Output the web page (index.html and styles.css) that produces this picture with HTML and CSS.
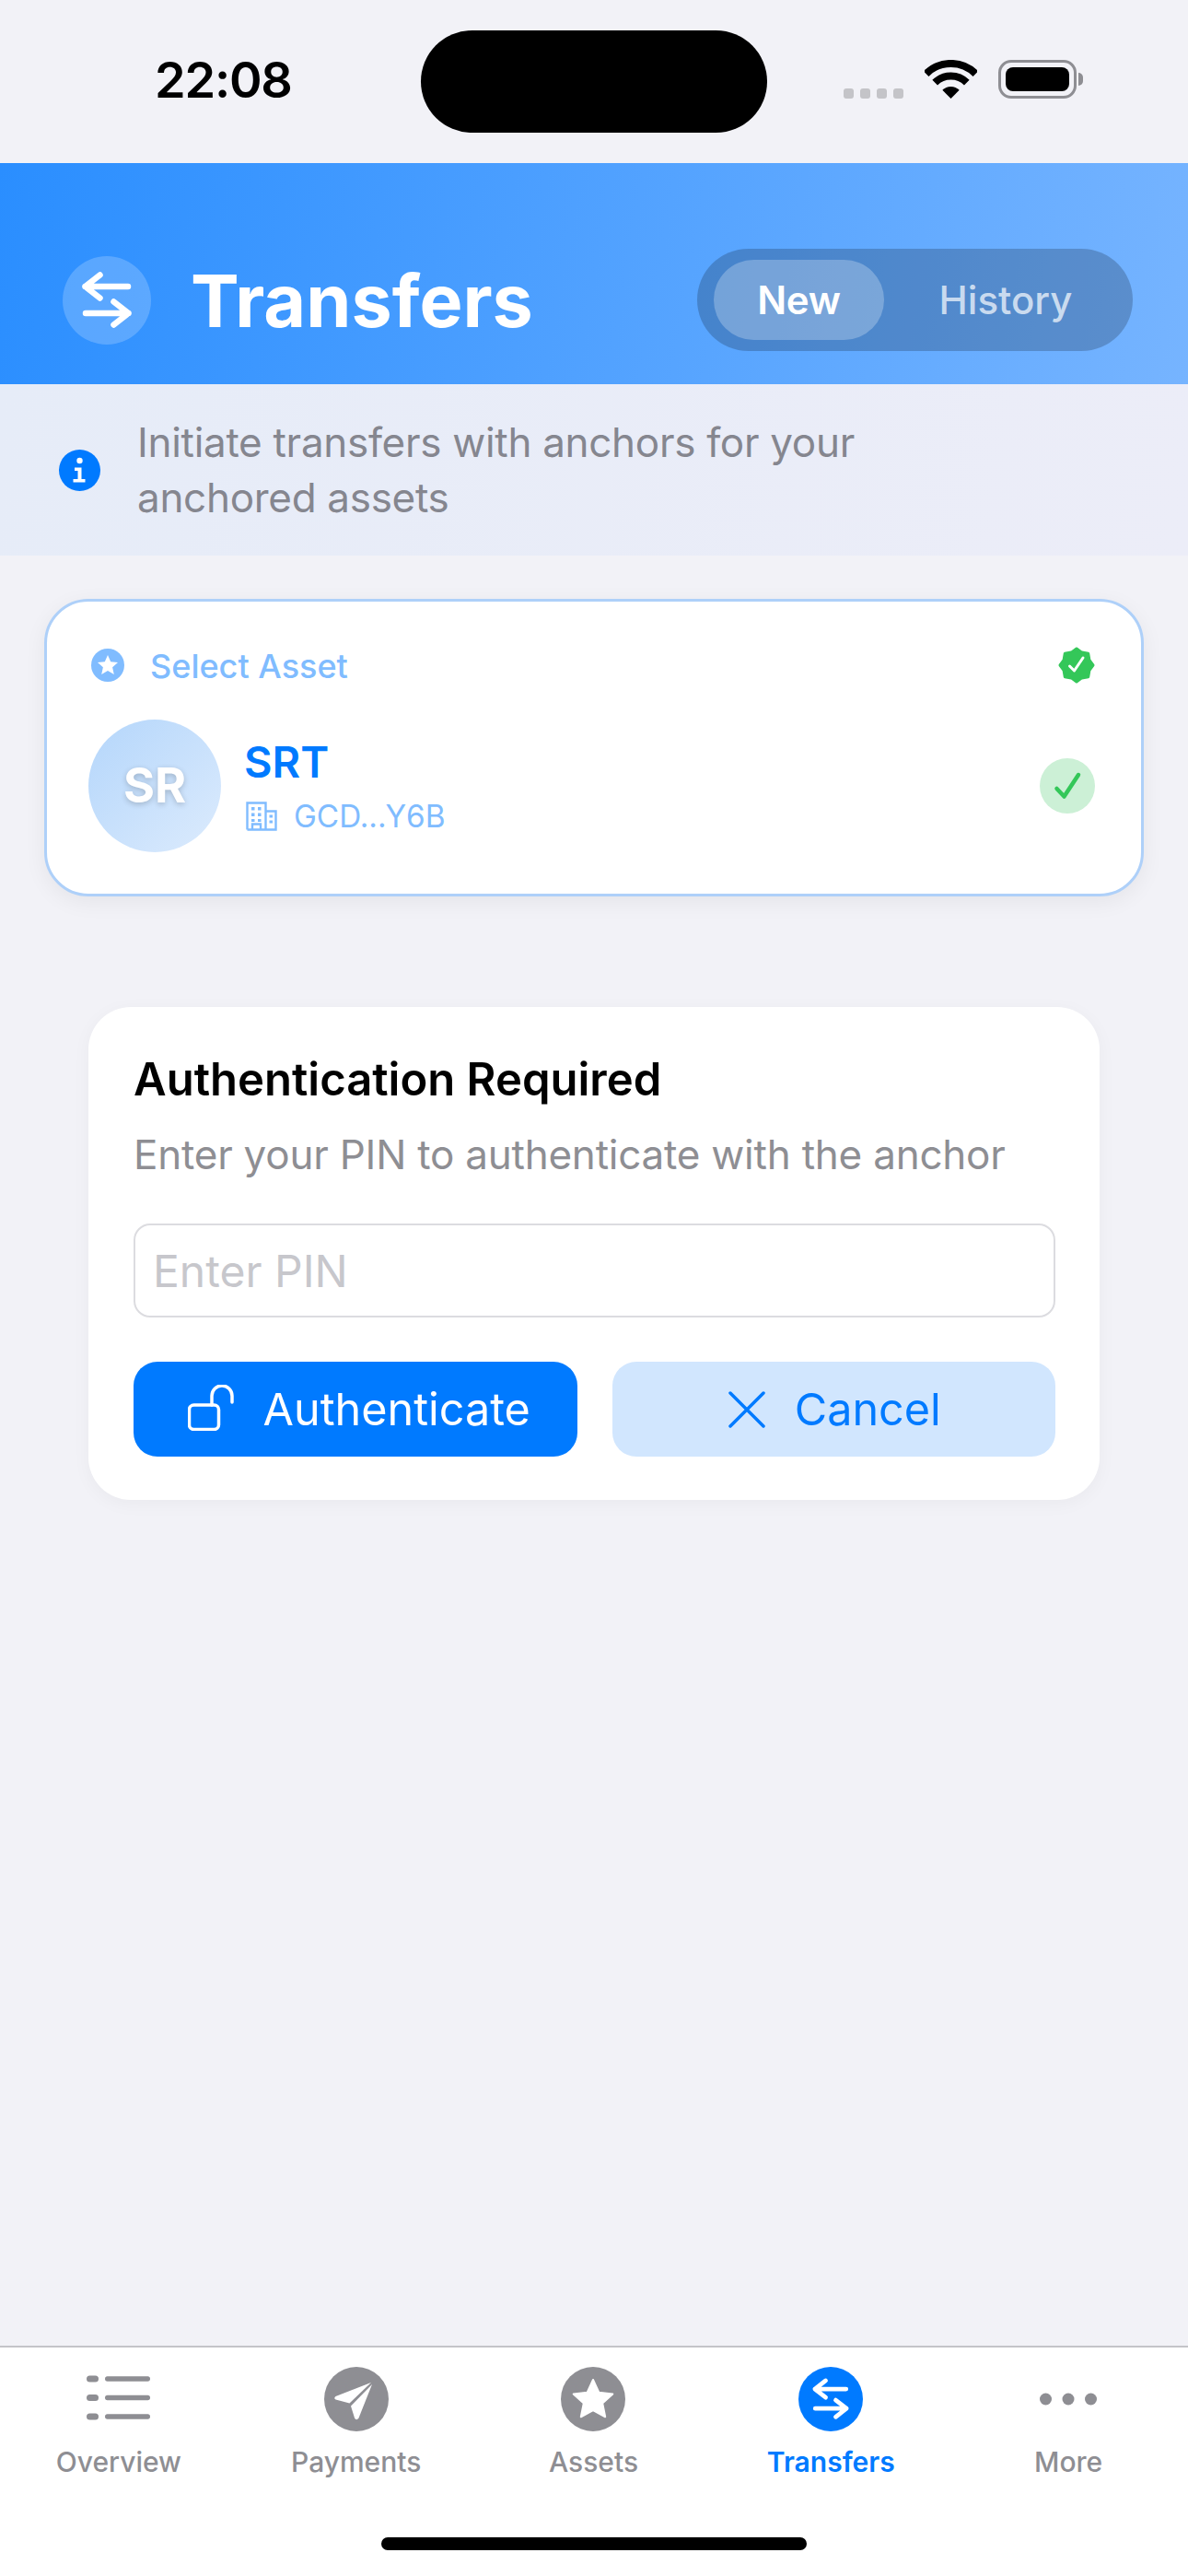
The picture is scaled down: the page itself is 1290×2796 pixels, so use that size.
FILE: index.html
```html
<!DOCTYPE html>
<html lang="en">

<head>
    <meta charset="UTF-8">
    <meta name="viewport" content="width=device-width, initial-scale=1.0">
    <title>Transfers</title>
    <link rel="stylesheet" href="styles.css">
</head>

<body>
    <div class="status-bar">
        <span class="status-time">22:08</span>
        <div class="island"></div>
        <div class="status-icons">
            <div class="signal"><i></i><i></i><i></i><i></i></div>
            <svg class="wifi" viewBox="0 0 57 42">
                <path d="M1.6 15.1A38 38 0 0 1 55.4 15.1" fill="none" stroke="#000" stroke-width="8" />
                <path d="M11.2 24.7A24.5 24.5 0 0 1 45.8 24.7" fill="none" stroke="#000" stroke-width="8" />
                <path d="M28.5 42L19.3 32.8A13 13 0 0 1 37.7 32.8Z" fill="#000" />
            </svg>
            <div class="battery">
                <div class="battery-body"><div class="battery-fill"></div></div>
                <div class="battery-tip"></div>
            </div>
        </div>
    </div>

    <header class="header">
        <div class="header-title">
            <div class="header-icon">
                <svg class="arrows" viewBox="0 0 96 96">
                    <path d="M24.5 33H71M40.5 20.5L24.5 33L40.5 45.5M25 62H71.5M55.5 49.5L71.5 62L55.5 74.5" />
                </svg>
            </div>
            <h1>Transfers</h1>
        </div>
        <div class="segment">
            <button class="segment-btn active" type="button">New</button>
            <button class="segment-btn" type="button">History</button>
        </div>
    </header>

    <div class="info-band">
        <svg class="info-icon" viewBox="0 0 45 45">
            <circle cx="22.5" cy="22.5" r="22.5" fill="#007aff" />
            <circle cx="22.5" cy="12" r="3.2" fill="#fff" />
            <path d="M17 19.5h7.5v12.5h4v3.5h-13v-3.5h5v-9h-3.5z" fill="#fff" />
        </svg>
        <p>Initiate transfers with anchors for your<br>anchored assets</p>
    </div>

    <main class="content">
        <section class="asset-card">
            <div class="asset-head">
                <div class="asset-label">
                    <svg class="star-icon" viewBox="0 0 36 36">
                        <circle cx="18" cy="18" r="18" fill="#80bcff" />
                        <path d="M18 7l3.2 7.2 7.8.8-5.9 5.2 1.7 7.7-6.8-4-6.8 4 1.7-7.7L7 15l7.8-.8z" fill="#fff" />
                    </svg>
                    <span>Select Asset</span>
                </div>
                <svg class="verified" viewBox="0 0 40 40">
                    <path d="M20 2L25.7 6.1 32.7 7.3 33.9 14.3 38 20 33.9 25.7 32.7 32.7 25.7 33.9 20 38 14.3 33.9 7.3 32.7 6.1 25.7 2 20 6.1 14.3 7.3 7.3 14.3 6.1Z" fill="#34c759" stroke="#34c759" stroke-width="3" stroke-linejoin="round" />
                    <path d="M12.5 21l5 5 9.5-14" fill="none" stroke="#fff" stroke-width="3" stroke-linecap="round" stroke-linejoin="round" />
                </svg>
            </div>
            <div class="asset-row">
                <div class="avatar">SR</div>
                <div class="asset-info">
                    <div class="asset-code">SRT</div>
                    <div class="asset-issuer">
                        <svg class="building" viewBox="0 0 34 32">
                            <path d="M1.5 30.5V1.5h20v29M21.5 10.5h11v20H1.5M7 30.5v-6h9v6" fill="none" stroke="#80bcff" stroke-width="2.4" />
                            <path d="M6 6h3.5v3.5H6zM13 6h3.5v3.5H13zM6 12.5h3.5V16H6zM13 12.5h3.5V16H13zM6 19h3.5v3H6zM13 19h3.5v3H13zM25.5 14.5h3.5v3h-3.5zM25.5 20.5h3.5v3h-3.5z" fill="#80bcff" />
                        </svg>
                        <span>GCD...Y6B</span>
                    </div>
                </div>
                <div class="check-circle">
                    <svg viewBox="0 0 60 60">
                        <path d="M18.5 33l8 8.5L42 18" fill="none" stroke="#34c759" stroke-width="4.5" stroke-linecap="round" stroke-linejoin="round" />
                    </svg>
                </div>
            </div>
        </section>

        <section class="auth-card">
            <h2>Authentication Required</h2>
            <p>Enter your PIN to authenticate with the anchor</p>
            <input class="pin-input" type="password" placeholder="Enter PIN">
            <div class="auth-actions">
                <button class="btn btn-primary" type="button">
                    <svg class="lock" viewBox="0 0 50 50">
                        <rect x="1.5" y="22" width="32" height="26.5" rx="5" />
                        <path d="M26 22V12a11 11 0 0 1 22 0v7" stroke-linecap="round" />
                    </svg>
                    Authenticate
                </button>
                <button class="btn btn-secondary" type="button">
                    <svg class="cross" viewBox="0 0 40 40">
                        <path d="M2 2L38 38M38 2L2 38" />
                    </svg>
                    Cancel
                </button>
            </div>
        </section>
    </main>

    <nav class="tab-bar">
        <div class="tab">
            <svg class="tab-icon" viewBox="0 0 70 70">
                <g fill="#8e8e93">
                    <rect x="0" y="9.5" width="13" height="7" rx="3.5" />
                    <rect x="20" y="10.3" width="49" height="5.5" rx="2.7" />
                    <rect x="0" y="30" width="13" height="7" rx="3.5" />
                    <rect x="20" y="30.8" width="49" height="5.5" rx="2.7" />
                    <rect x="0" y="50.5" width="13" height="7" rx="3.5" />
                    <rect x="20" y="51.3" width="49" height="5.5" rx="2.7" />
                </g>
            </svg>
            <span>Overview</span>
        </div>
        <div class="tab">
            <svg class="tab-icon" viewBox="0 0 70 70">
                <circle cx="35" cy="35" r="35" fill="#8e8e93" />
                <path d="M51 17L12.5 32Q10 34 12.5 35.5L27.5 39.5Z" fill="#fff" />
                <path d="M52 19L29 42.5L33 55.5Q35 59 37.5 55.5Z" fill="#fff" />
            </svg>
            <span>Payments</span>
        </div>
        <div class="tab">
            <svg class="tab-icon" viewBox="0 0 70 70">
                <circle cx="35" cy="35" r="35" fill="#8e8e93" />
                <path d="M35 14l6.3 13.7 15 1.7-11.1 10.1 3 14.8L35 47l-13.2 7.3 3-14.8-11.1-10.1 15-1.7z" fill="#fff" stroke="#fff" stroke-width="2" stroke-linejoin="round" />
            </svg>
            <span>Assets</span>
        </div>
        <div class="tab tab-active">
            <svg class="tab-icon" viewBox="0 0 70 70">
                <circle cx="35" cy="35" r="35" fill="#007aff" />
                <svg class="arrows" x="0" y="0" width="70" height="70" viewBox="0 0 96 96">
                    <path d="M24.5 33H71M40.5 20.5L24.5 33L40.5 45.5M25 62H71.5M55.5 49.5L71.5 62L55.5 74.5" />
                </svg>
            </svg>
            <span>Transfers</span>
        </div>
        <div class="tab">
            <svg class="tab-icon" viewBox="0 0 70 70">
                <g fill="#8e8e93">
                    <circle cx="10.5" cy="35" r="6.5" />
                    <circle cx="35" cy="35" r="6.5" />
                    <circle cx="59.5" cy="35" r="6.5" />
                </g>
            </svg>
            <span>More</span>
        </div>
        <div class="home-indicator"></div>
    </nav>
</body>

</html>
```

FILE: styles.css
```css
* {
    box-sizing: border-box;
}

body {
    margin: 0;
    min-height: 2796px;
    display: flex;
    flex-direction: column;
    background-color: #f2f2f7;
    font-family: Inter, "Liberation Sans", sans-serif;
}

/* status bar */
.status-bar {
    height: 177px;
    display: flex;
    align-items: flex-start;
    padding-left: 168px;
}

.status-time {
    width: 289px;
    margin-top: 57px;
    font-size: 54px;
    line-height: 60px;
    font-weight: 600;
    letter-spacing: -1.2px;
    color: #000;
}

.island {
    width: 376px;
    height: 111px;
    margin-top: 33px;
    border-radius: 56px;
    background-color: #000;
}

.status-icons {
    display: flex;
    align-items: flex-end;
    margin-top: 65px;
    margin-left: 83px;
}

.signal {
    display: flex;
    gap: 7px;
    margin-right: 23px;
}

.signal i {
    width: 11px;
    height: 11px;
    border-radius: 3px;
    background-color: #c4c4c8;
}

.wifi {
    width: 57px;
    height: 42px;
    margin-right: 23px;
}

.battery {
    display: flex;
    align-items: center;
}

.battery-body {
    width: 85px;
    height: 42px;
    padding: 5px;
    border: 3px solid #8e8e93;
    border-radius: 14px;
}

.battery-fill {
    width: 100%;
    height: 100%;
    border-radius: 8px;
    background-color: #000;
}

.battery-tip {
    width: 5px;
    height: 14px;
    margin-left: 2px;
    border-radius: 0 5px 5px 0;
    background-color: #8e8e93;
}

/* header */
.header {
    height: 240px;
    display: flex;
    justify-content: space-between;
    align-items: center;
    padding: 93px 60px 36px 68px;
    background: linear-gradient(100deg, #2a8eff 0%, #76b4ff 100%);
}

.header-title {
    display: flex;
    align-items: center;
    gap: 43px;
}

.header-icon {
    width: 96px;
    height: 96px;
    border-radius: 50%;
    background-color: rgba(255, 255, 255, 0.2);
}

.arrows {
    display: block;
}

.arrows path {
    fill: none;
    stroke: #fff;
    stroke-width: 6.5;
    stroke-linecap: round;
    stroke-linejoin: round;
}

.header h1 {
    margin: 0;
    font-size: 79px;
    line-height: 96px;
    font-weight: 700;
    color: #fff;
}

.segment {
    width: 473px;
    height: 111px;
    display: flex;
    padding: 12px 18px;
    border-radius: 56px;
    background-color: rgba(0, 0, 0, 0.2);
}

.segment-btn {
    height: 87px;
    padding: 0 0 0 12px;
    border: 0;
    border-radius: 44px;
    background: none;
    font-family: inherit;
    font-size: 42px;
    font-weight: 500;
    color: rgba(255, 255, 255, 0.7);
    flex: 1;
}

.segment-btn.active {
    flex: 0 0 185px;
    padding: 0;
    font-weight: 600;
    letter-spacing: -0.3px;
    color: #fff;
    background-color: rgba(255, 255, 255, 0.25);
}

/* info text under the header */
.info-band {
    height: 186px;
    display: flex;
    align-items: center;
    gap: 40px;
    padding-left: 64px;
    background: linear-gradient(100deg, #e6ecf8 0%, #ecedf8 100%);
}

.info-icon {
    width: 45px;
    height: 45px;
}

.info-band p {
    margin: 0;
    font-size: 44px;
    line-height: 60px;
    letter-spacing: -0.3px;
    color: #85868f;
}

/* cards */
.content {
    flex: 1;
    padding: 47px 48px 0;
}

.asset-card {
    height: 323px;
    padding: 48.5px 45px 0;
    border: 3px solid #aed0f9;
    border-radius: 48px;
    background-color: #fff;
    box-shadow: 0 6px 24px rgba(0, 0, 0, 0.06);
}

.asset-head {
    display: flex;
    justify-content: space-between;
    align-items: center;
    padding-right: 5px;
}

.asset-label {
    display: flex;
    align-items: center;
    gap: 28px;
    margin-left: 3px;
    font-size: 36px;
    line-height: 38px;
    font-weight: 500;
    color: #80bcff;
}

.asset-label span {
    padding-top: 2px;
}

.star-icon {
    width: 36px;
    height: 36px;
}

.verified {
    width: 40px;
    height: 40px;
}

.asset-row {
    display: flex;
    align-items: center;
    gap: 25px;
    margin-top: 39px;
    padding-right: 5px;
}

.avatar {
    width: 144px;
    height: 144px;
    display: flex;
    justify-content: center;
    align-items: center;
    border-radius: 50%;
    background: linear-gradient(135deg, #b4d6fb 0%, #dcebfd 100%);
    font-size: 52px;
    font-weight: 700;
    color: #fff;
    text-shadow: 0 2px 6px rgba(0, 0, 0, 0.2);
}

.asset-info {
    flex: 1;
}

.asset-code {
    font-size: 47px;
    line-height: 56px;
    font-weight: 600;
    color: #007aff;
}

.asset-issuer {
    display: flex;
    align-items: center;
    gap: 18px;
    margin: 11px 0 0 2px;
    font-size: 33.3px;
    line-height: 40px;
    color: #80bcff;
}

.building {
    width: 34px;
    height: 32px;
}

.check-circle {
    width: 60px;
    height: 60px;
    border-radius: 50%;
    background-color: #ccf0d6;
}

.check-circle svg {
    display: block;
}

.auth-card {
    height: 535px;
    margin: 120px 48px 0;
    padding: 47px 48px 0 49px;
    border-radius: 46px;
    background-color: #fff;
    box-shadow: 0 4px 20px rgba(0, 0, 0, 0.04);
}

.auth-card h2 {
    margin: 0;
    font-size: 49px;
    line-height: 64px;
    font-weight: 600;
    color: #000;
}

.auth-card p {
    margin: 17px 0 0;
    font-size: 44px;
    line-height: 64px;
    letter-spacing: -0.23px;
    color: #8e8e93;
}

.pin-input {
    display: block;
    width: 100%;
    height: 102px;
    margin-top: 43px;
    padding: 0 19px;
    border: 2px solid #dcdce0;
    border-radius: 18px;
    outline: none;
    font-family: inherit;
    font-size: 48px;
    background-color: #fff;
}

.pin-input::placeholder {
    color: #c7c7cc;
}

.auth-actions {
    display: flex;
    gap: 38px;
    margin-top: 48px;
}

.btn {
    flex: 1;
    height: 103px;
    display: flex;
    justify-content: center;
    align-items: center;
    gap: 32px;
    padding: 0;
    border: 0;
    border-radius: 26px;
    font-family: inherit;
    font-size: 48.5px;
}

.btn-primary {
    color: #fff;
    background-color: #007aff;
}

.btn-secondary {
    color: #007aff;
    background-color: #d1e6fe;
}

.lock {
    width: 50px;
    height: 50px;
    margin: -3px 0 0 8px;
}

.lock rect,
.lock path {
    fill: none;
    stroke: #fff;
    stroke-width: 3.5;
}

.cross {
    width: 40px;
    height: 40px;
    margin-left: 2px;
}

.cross path {
    fill: none;
    stroke: #007aff;
    stroke-width: 3.5;
    stroke-linecap: round;
}

/* tab bar */
.tab-bar {
    position: relative;
    height: 250px;
    display: flex;
    padding: 21px 1px 0 0;
    border-top: 2px solid #c4c4c8;
    background-color: #fff;
}

.tab {
    flex: 1;
    display: flex;
    flex-direction: column;
    align-items: center;
    gap: 12px;
    font-size: 30px;
    line-height: 42px;
    font-weight: 500;
    color: #8e8e93;
}

.tab-active {
    font-weight: 600;
    color: #007aff;
}

.tab-icon {
    width: 70px;
    height: 70px;
}

.home-indicator {
    position: absolute;
    left: 414px;
    bottom: 28px;
    width: 462px;
    height: 14px;
    border-radius: 7px;
    background-color: #000;
}
```
